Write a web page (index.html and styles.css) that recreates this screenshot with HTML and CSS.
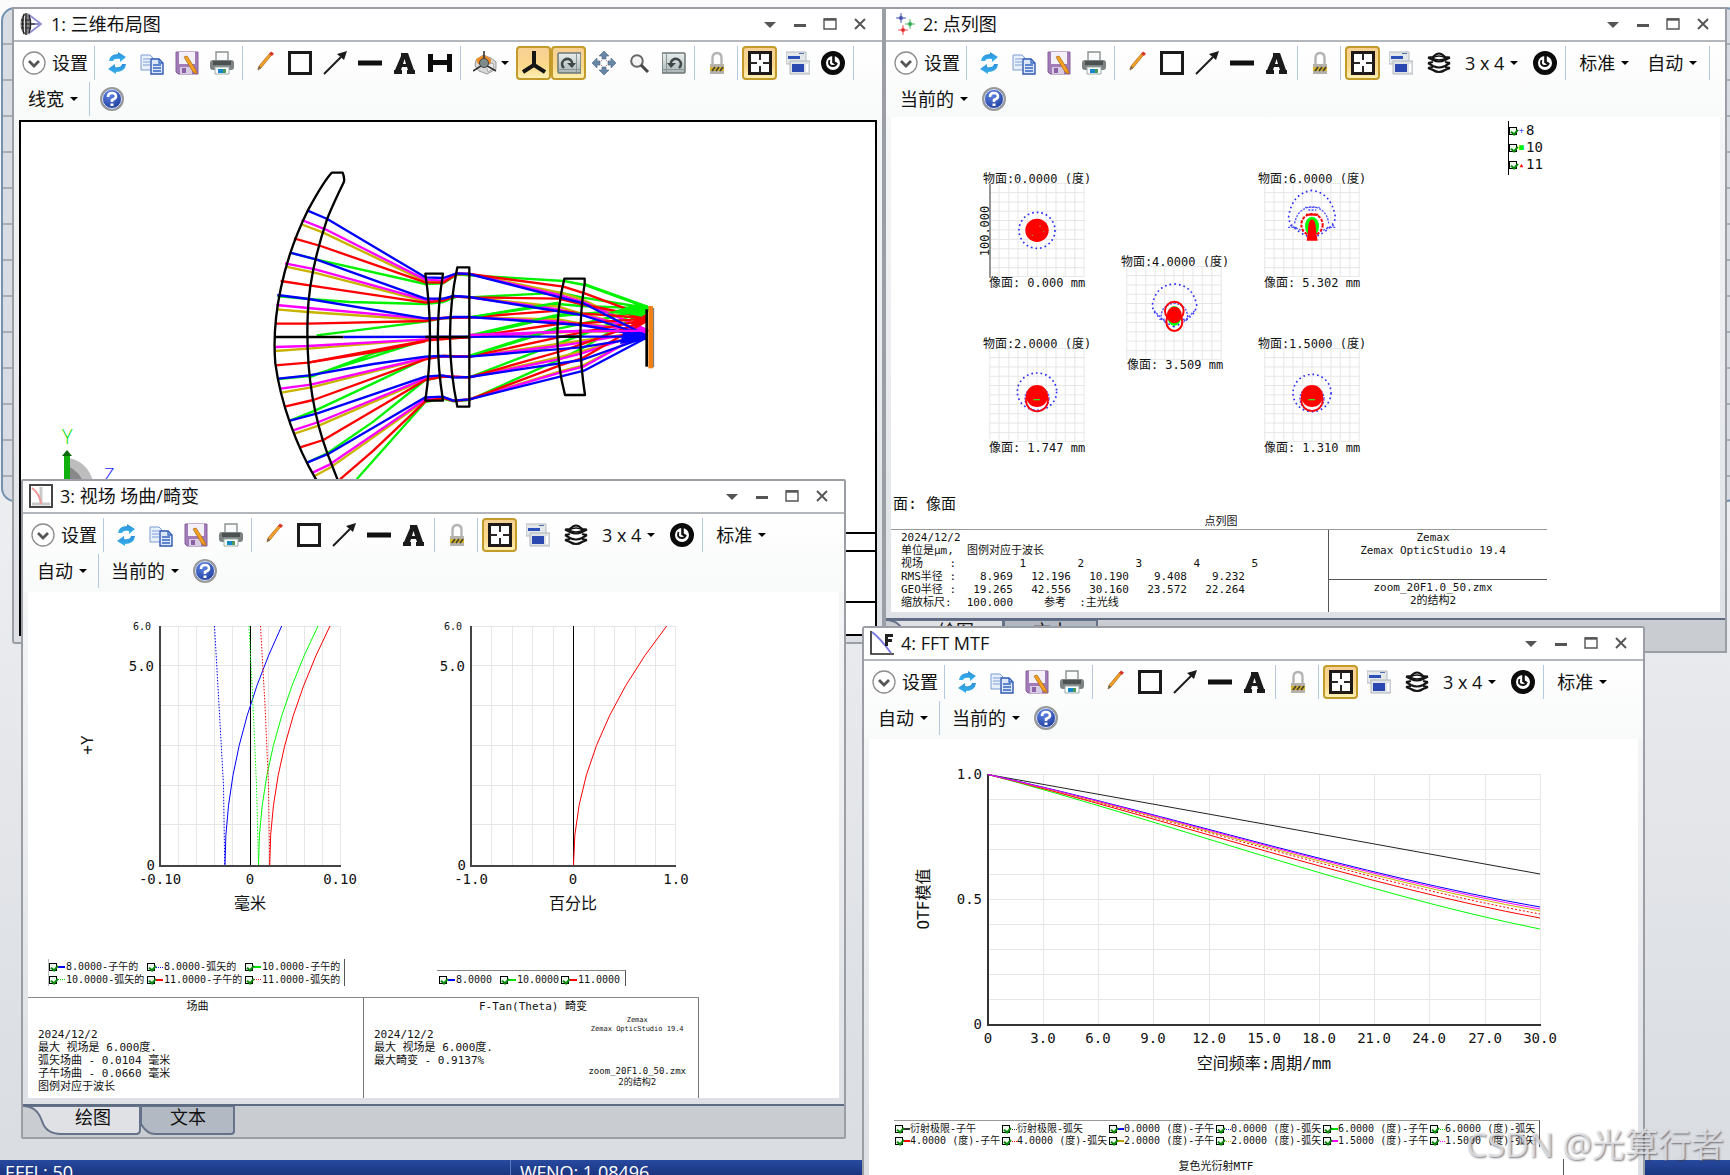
FILE: index.html
```html
<!DOCTYPE html>
<html lang="zh-CN">
<head>
<meta charset="utf-8">
<title>Zemax OpticStudio</title>
<link rel="stylesheet" href="styles.css">
</head>
<body>
<svg class="sprite" aria-hidden="true">
  <defs>
    <linearGradient id="metal" x1="0" y1="0" x2="0" y2="1"><stop offset="0" stop-color="#e9eeee"/><stop offset="1" stop-color="#a9b5b5"/></linearGradient>
    <linearGradient id="sky" x1="0" y1="0" x2="0" y2="1"><stop offset="0" stop-color="#2f8fd8"/><stop offset="1" stop-color="#35b4ee"/></linearGradient>
    <radialGradient id="globe" cx=".4" cy=".3" r=".8"><stop offset="0" stop-color="#5f86e6"/><stop offset="1" stop-color="#15308f"/></radialGradient>
  </defs>
  <symbol id="i-chevron" viewBox="0 0 24 24"><circle cx="12" cy="12" r="11" fill="#fff" stroke="#8d8d8d" stroke-width="1.3"/><path d="M7 10l5 5 5-5" fill="none" stroke="#555" stroke-width="2.8"/></symbol>
  <symbol id="i-refresh" viewBox="0 0 24 24"><path d="M4 10q1-7 9-7V1l8 5-6 5V8q-6-1-7 2z" fill="url(#sky)"/><path d="M21 13q-1 8-10 8v2l-8-5 7-5v3q6 1 7-3z" fill="url(#sky)"/></symbol>
  <symbol id="i-copy" viewBox="0 0 24 24"><path d="M1 4h9l3 3v12H1z" fill="#e8f0fb" stroke="#7d9cd0"/><path d="M3 8h7M3 11h7M3 14h7" stroke="#7fa0d8"/><path d="M11 8h8l4 4v11H11z" fill="#dce8fa" stroke="#2f58b0" stroke-width="1.4"/><path d="M19 8v4h4M13 14h8M13 17h8M13 20h8" stroke="#3566c0" stroke-width="1.3" fill="none"/></symbol>
  <symbol id="i-save" viewBox="0 0 24 24"><path d="M1 1h22v22H3l-2-2z" fill="#a27bb8" stroke="#86629c"/><path d="M4 1h16v12H4z" fill="#f3f1f7"/><path d="M5 16h12v7H5z" fill="#d8cce3"/><path d="M7 17h4v5H7z" fill="#8b62a5"/><path d="M9 6l3-1 9 14 1 4-4-2z" fill="#f5a020" stroke="#a86612" stroke-width=".7"/><path d="M19 20l2-1 1 4z" fill="#d82"/></symbol>
  <symbol id="i-print" viewBox="0 0 24 24"><path d="M6 1h12v10H6z" fill="#fafafa" stroke="#8b9191" stroke-width="1.4"/><rect x="0" y="9" width="24" height="10" rx="3" fill="#7d8282"/><path d="M3 10h18v4H3z" fill="#4c5151"/><path d="M5 16h14v7H5z" fill="#fff" stroke="#9aa" /><path d="M8 18h5v4H8z" fill="#1586c8"/><path d="M13 18h3v4h-3z" fill="#4b9a5a"/></symbol>
  <symbol id="i-pencil" viewBox="0 0 24 24"><path d="M5 19l1-4L17 2l2 1.500L8 17z" fill="#f6a12a" stroke="#b06c18" stroke-width=".8"/><path d="M16 3l2-2.500 3 2L19 5z" fill="#d8362a"/><path d="M5 19l1-4 2 2z" fill="#666"/></symbol>
  <symbol id="i-rect" viewBox="0 0 24 24"><path d="M1.500 1.500h21v21h-21z" fill="#fff" stroke="#1b1b1b" stroke-width="3"/></symbol>
  <symbol id="i-arrow" viewBox="0 0 24 24"><path d="M1 23L18 6" stroke="#1b1b1b" stroke-width="2"/><path d="M24 0l-3 9-7-6z" fill="#1b1b1b"/></symbol>
  <symbol id="i-line" viewBox="0 0 24 24"><path d="M0 12h24" stroke="#111" stroke-width="5"/></symbol>
  <symbol id="i-a" viewBox="0 0 24 24"><path fill-rule="evenodd" d="M8 2h7l6 17h1v4h-8v-4h1l-1-3H9l-1 3h1v4H1v-4h1L8 5zM11.500 8L10 13h3z" fill="#1b1b1b"/></symbol>
  <symbol id="i-h" viewBox="0 0 24 24"><path d="M0 3h5v6h14V3h5v18h-5v-7H5v7H0z" fill="#0c0c0c"/></symbol>
  <symbol id="i-cube" viewBox="0 0 24 24"><path d="M3 9l7-5 8 3 5 4v7l-9 5-8-3-4-5z" fill="#d9d9d9" stroke="#999"/><path d="M3 8l8-4 7 4v6l-4 2-9-3z" fill="#f08c22"/><path d="M13 14l7-2 1 5-6 4z" fill="#eee" stroke="#aaa"/><path d="M11 0v13M0 20l11-7 12 7" stroke="#333" stroke-width="1.600" fill="none"/><circle cx="11" cy="12" r="4.500" fill="#7f8b8b" stroke="#444"/></symbol>
  <symbol id="i-axes" viewBox="0 0 24 24"><path d="M12 0v14L1 21M12 14l11 7" stroke="#151515" stroke-width="4" fill="none"/></symbol>
  <symbol id="i-rot" viewBox="0 0 24 24"><rect x="1" y="2" width="23" height="20" rx="1" fill="url(#metal)" stroke="#6c7777" stroke-width="1.500"/><path d="M19.500 3v18M1 18.500h22" stroke="#8a9696"/><path d="M7 17q-4-4 0-8 5-3 8 2v3" fill="none" stroke="#3f4848" stroke-width="2.400"/><path d="M10 12h9l-4 5z" fill="#3f4848"/></symbol>
  <symbol id="i-unrot" viewBox="0 0 24 24"><rect x="0" y="2" width="23" height="20" rx="1" fill="url(#metal)" stroke="#6c7777" stroke-width="1.500"/><path d="M4.500 3v18M1 18.500h22" stroke="#8a9696"/><path d="M17 17q4-4 0-8-5-3-8 2v3" fill="none" stroke="#3f4848" stroke-width="2.400"/><path d="M5 12h9l-5 5z" fill="#3f4848"/></symbol>
  <symbol id="i-pan" viewBox="0 0 24 24"><g fill="#6787a6" stroke="#49617e" stroke-width=".6"><path d="M12 0l5 5h-3v3h-4V5H7zM12 24l-5-5h3v-3h4v3h3zM0 12l5-5v3h3v4H5v3zM24 12l-5 5v-3h-3v-4h3V7z"/></g><path d="M9 9h1v1H9zM14 9h1v1h-1zM9 14h1v1H9zM14 14h1v1h-1z" fill="#c66"/></symbol>
  <symbol id="i-zoom" viewBox="0 0 24 24"><circle cx="10" cy="10" r="5.800" fill="#f4f4f4" stroke="#666" stroke-width="2"/><path d="M14 14l7 7" stroke="#444" stroke-width="3"/></symbol>
  <symbol id="i-lock" viewBox="0 0 24 24"><path d="M7.500 14V7q0-5 4.500-5t4.500 5v7" fill="none" stroke="#b4b4b4" stroke-width="2.400"/><path d="M5 13h14v10H5z" fill="#b4b2aa"/><path d="M5 16h14v4H5z" fill="#d9b52c"/><path d="M7 20l3-4M11 20l3-4M15 20l3-4" stroke="#4a4430" stroke-width="1.800"/></symbol>
  <symbol id="i-frame" viewBox="0 0 24 24"><path d="M1.500 1.500h21v21h-21z" fill="#fff" stroke="#1f1a17" stroke-width="3"/><path d="M12 2v7M12 15v7M2 12h7M15 12h7" stroke="#2b2623" stroke-width="2"/></symbol>
  <symbol id="i-windows" viewBox="0 0 24 24"><path d="M0 1h20v12H0z" fill="#e4e7ea" stroke="#b4babf"/><path d="M2 5h12v3H2z" fill="#2c50b8"/><path d="M13 2h5v1h-5z" fill="#5070b0"/><path d="M4 10h20v13H4z" fill="#dfe3e6" stroke="#b0b6bb"/><path d="M6 13h12v8H6z" fill="#2b48b0"/><path d="M20 13h2v8h-2z" fill="#fff"/></symbol>
  <symbol id="i-layers" viewBox="0 0 24 24"><path d="M1 6.500L6 6q3-3.500 6-3.500T18 6l5 .5M1 6.500L6 9q6 3 12 0l5-2.500M1 12l5-1M18 11l5 1M1 12l5 3q6 3 12 0l5-3M1 17l5-1M18 16l5 1M1 17l5 2q6 4 12 0l5-2" fill="none" stroke="#141414" stroke-width="2.200"/><path d="M5 7q7-4 14 0-7 4-14 0" fill="#fff" stroke="#141414" stroke-width="1.500"/></symbol>
  <symbol id="i-target" viewBox="0 0 24 24"><circle cx="12" cy="12" r="9.500" fill="#fff" stroke="#0b0b0b" stroke-width="5"/><path d="M12.500 5v6l3 2" stroke="#111" stroke-width="2.600" fill="none"/><path d="M8.500 9q-2 6 3.500 6 3 0 4-3" fill="none" stroke="#111" stroke-width="1.800"/></symbol>
  <symbol id="i-help" viewBox="0 0 24 24"><circle cx="12" cy="12" r="11" fill="url(#globe)" stroke="#9a9a9a" stroke-width="2"/><circle cx="12" cy="12" r="9.500" fill="none" stroke="#dfe4ee" stroke-width="1"/><path d="M8 10q0-4 4-4t4 3.500q0 2-4 3.500v2" fill="none" stroke="#fff" stroke-width="2.600"/><path d="M10.500 16.500h3v2.500h-3z" fill="#fff"/></symbol>
  <symbol id="i-down" viewBox="0 0 8 8"><path d="M0 2h8L4 6z"/></symbol>
  <symbol id="w-menu" viewBox="0 0 14 14"><path d="M1 5h12l-6 6z" fill="#555"/></symbol>
  <symbol id="w-min" viewBox="0 0 14 14"><path d="M1 8.500h12" stroke="#555" stroke-width="3"/></symbol>
  <symbol id="w-max" viewBox="0 0 14 14"><path d="M1 2h12v10H1z" fill="none" stroke="#555" stroke-width="1.400"/><path d="M1 2.500h12" stroke="#555" stroke-width="2.400"/></symbol>
  <symbol id="w-close" viewBox="0 0 14 14"><path d="M2 2l10 10M12 2L2 12" stroke="#555" stroke-width="1.900"/></symbol>
  <symbol id="s-grid" viewBox="0 0 286 283"><path d="M1 1h284v281H1zM29 0v283M58 0v283M86 0v283M115 0v283M143 0v283M171 0v283M200 0v283M228 0v283M257 0v283M0 29h286M0 57h286M0 85h286M0 113h286M0 141h286M0 170h286M0 198h286M0 226h286M0 255h286" fill="none" stroke="#e6e6e6" stroke-width="3"/></symbol>
</svg>

<div class="app">
  <main class="desktop">
    <div class="editor"></div>

    <section class="window w-layout">
      <header class="titlebar">
        <svg class="icon" viewBox="0 0 24 24"><path d="M8 2l13 10L8 22M8 12h13" fill="none" stroke="#8d8fd0" stroke-width="1.800"/><ellipse cx="6" cy="12" rx="5.500" ry="11" fill="#8a8a8a"/><path d="M6 1v22M4 2q-3 10 0 20M9 3q3 9 0 18M1 8h10M1 12h14M1 16h10" stroke="#222" stroke-width="1.200" fill="none"/><path d="M4.500 4v16" stroke="#ddd"/></svg>
        <h2>1: 三维布局图</h2>
        <div class="winbtns"><button aria-label="菜单"><svg><use href="#w-menu"/></svg></button><button aria-label="最小化"><svg><use href="#w-min"/></svg></button><button aria-label="最大化"><svg><use href="#w-max"/></svg></button><button aria-label="关闭"><svg><use href="#w-close"/></svg></button></div>
      </header>
      <div class="toolbar">
        <div class="row">
          <button class="settings"><svg class="icon"><use href="#i-chevron"/></svg>设置</button><i class="sep"></i>
          <button class="tool" aria-label="刷新"><svg class="icon"><use href="#i-refresh"/></svg></button><button class="tool" aria-label="复制"><svg class="icon"><use href="#i-copy"/></svg></button><button class="tool" aria-label="保存"><svg class="icon"><use href="#i-save"/></svg></button><button class="tool" aria-label="打印"><svg class="icon"><use href="#i-print"/></svg></button><i class="sep"></i>
          <button class="tool" aria-label="铅笔"><svg class="icon"><use href="#i-pencil"/></svg></button><button class="tool" aria-label="矩形"><svg class="icon"><use href="#i-rect"/></svg></button><button class="tool" aria-label="箭头"><svg class="icon"><use href="#i-arrow"/></svg></button><button class="tool" aria-label="直线"><svg class="icon"><use href="#i-line"/></svg></button><button class="tool" aria-label="文字"><svg class="icon"><use href="#i-a"/></svg></button><button class="tool" aria-label="标尺"><svg class="icon"><use href="#i-h"/></svg></button><i class="sep"></i>
          <button class="tool view" aria-label="视图"><svg class="icon"><use href="#i-cube"/></svg><svg class="caret"><use href="#i-down"/></svg></button><button class="tool on" aria-label="坐标轴"><svg class="icon"><use href="#i-axes"/></svg></button><button class="tool on" aria-label="旋转"><svg class="icon"><use href="#i-rot"/></svg></button><button class="tool" aria-label="平移"><svg class="icon"><use href="#i-pan"/></svg></button><button class="tool" aria-label="缩放"><svg class="icon"><use href="#i-zoom"/></svg></button><button class="tool" aria-label="复位"><svg class="icon"><use href="#i-unrot"/></svg></button><i class="sep"></i>
          <button class="tool" aria-label="锁定"><svg class="icon"><use href="#i-lock"/></svg></button><i class="sep"></i>
          <button class="tool on" aria-label="适应窗口"><svg class="icon"><use href="#i-frame"/></svg></button><button class="tool wide" aria-label="克隆窗口"><svg class="icon"><use href="#i-windows"/></svg></button><button class="tool" aria-label="重置"><svg class="icon"><use href="#i-target"/></svg></button><i class="sep"></i>
        </div>
        <div class="row">
          <button class="drop">线宽<svg class="caret"><use href="#i-down"/></svg></button><i class="sep"></i>
          <button class="tool" aria-label="帮助"><svg class="icon"><use href="#i-help"/></svg></button>
        </div>
      </div>
      <div class="canvas boxed">
        <svg class="plot" viewBox="21 122 854 512" preserveAspectRatio="xMinYMin meet">
          <g transform="translate(240 150) scale(.33333)" fill="none" stroke-width="7" stroke-linejoin="round">
            <path stroke="#00f200" d="M150 308L228 328 556 402 610 400 650 374 688 376 972 393 1034 405 1222 473M112 438L206 447 330 456 556 462 610 456 650 440 688 442 960 428 1025 442 1222 474M230 556L556 515 610 505 688 502 955 462 1022 468 1222 475M115 687L208 678 400 620 556 570 688 561 955 498 1022 492 1222 476M208 682L400 610 556 572M150 812L225 782 400 700 556 626 610 618 688 620 955 536 1022 522 1222 477M203 937L262 910 400 815 556 690 610 680 688 682 955 580 1022 556 1222 478M350 988L556 756 608 746 640 754 688 750 955 630 1025 596 1222 479"/>
            <path stroke="#c8b400" d="M182 222L250 248 556 394 610 396 650 372 688 372 970 430 1034 452 1222 542M137 350L223 368 556 454 610 450 640 438 688 442 955 470 1022 490 1222 542M109 478L204 486 556 510 610 504 688 502 955 508 1022 520 1222 543M106 603L204 596 556 568 688 561 955 548 1022 545 1222 544M124 728L214 712 556 625 610 618 688 620 955 582 1022 572 1222 545M160 852L238 826 556 688 610 678 688 682 955 622 1025 604 1222 546M224 978L275 950 556 752 608 742 640 752 688 748 960 664 1030 646 1222 546"/>
            <path stroke="#f0f" d="M185 210L256 238 556 389 610 392 650 370 688 372 970 438 1034 458 1222 540M135 340L226 358 556 450 610 448 640 438 688 442 955 478 1022 494 1222 541M109 465L204 474 556 506 610 504 688 502 955 514 1022 524 1222 541M106 591L204 588 556 568 688 561 955 546 1022 542 1222 542M122 716L212 704 556 624 610 618 688 620 955 588 1022 578 1222 543M157 842L236 816 556 686 610 678 688 682 955 628 1025 610 1222 544M218 968L270 943 556 748 608 741 640 752 688 748 960 668 1030 650 1222 544"/>
            <path stroke="red" d="M162 265L242 288 556 397 610 398 650 372 688 372 970 410 1034 430 1222 500M122 393L213 407 556 458 610 452 640 440 688 442 955 446 1022 462 1222 502M106 521H204L556 513 610 504 688 502 955 482 1022 490 1222 504M106 646L204 638 556 572 688 561 955 522 1022 520 1222 506M134 770L220 750 556 628 610 618 688 620 955 562 1022 548 1222 508M178 893L250 870 556 690 610 680 688 682 955 606 1022 584 1222 510M300 988L400 902 556 754 608 744 640 753 688 749 960 646 1028 624 1222 512"/>
            <path stroke="red" d="M204 638L400 606 556 574"/><path stroke="#00f200" d="M690 556L955 494 1022 490M690 617L955 532M690 502L955 458M1034 402L1222 470"/>
            <path stroke="#00f" d="M203 182L262 207 556 382 610 384 650 370 688 372 1030 460 1222 558M150 308L228 328 556 446 610 446 640 438 688 441 1025 495 1222 558M112 435L206 447 556 505 600 505 640 501 688 501 1022 525 1222 558M310 561L1222 559M115 686L208 676 400 642 556 620 600 618 640 620 688 620 1022 592 1222 560M150 812L232 790 556 680 605 676 640 683 688 681 1025 630 1222 560M203 937L268 910 556 742 608 740 640 752 688 748 1032 662 1222 562"/>
            <path fill="#00f200" d="M1222 466L1190 462 1100 490 1160 492 1205 500 1235 478z"/><path fill="red" d="M1222 500L1170 518 1185 530 1222 512z"/><path fill="#00f" d="M1222 554L1150 546 1140 582 1222 568z"/>
            <path stroke="#f0f" d="M690 555L955 545 1235 542"/>
            <path stroke="#000" stroke-width="7" d="M102 561H310M556 561H690M955 560H1025"/>
            <g stroke="#000" stroke-width="7"><path d="M420 1200Q330 1110 228 988C170 890 122 760 106 640 94 500 130 330 203 182 226 140 248 98 275 68H308Q314 82 312 95C285 150 268 190 262 205 230 300 205 410 203 500 198 640 214 780 262 910L340 1110"/><path d="M556 371H609Q578 560 609 752H556Q584 560 556 371z"/><path d="M652 352H688V770H652Q608 560 652 352z"/><path d="M973 386H1034V400Q1008 560 1035 735H975Q930 560 973 386z"/><path stroke-width="8" d="M1220 478V650"/></g>
            <path d="M1232 468V655" stroke="#ef7f16" stroke-width="14"/><path d="M1241 474V652" stroke="#666" stroke-width="3"/>
          </g>
          <path d="M68 484V458Q88 461 94 484z" fill="#bdbdbd"/><path d="M68 484V466Q80 472 84 484z" fill="#888"/>
          <path d="M67 484V456" stroke="#11b011" stroke-width="6"/><path d="M62 456l5-6 5 6z" fill="#066b06"/>
          <text x="62" y="444" class="axis-y">Y</text><text x="104" y="481" class="axis-z">Z</text>
          <path d="M21 533H875M21 551H875M600 602H875" stroke="#000" stroke-width="2"/>
        </svg>
      </div>
    </section>

    <section class="window w-spot">
      <header class="titlebar">
        <svg class="icon" viewBox="0 0 24 24"><path d="M9 1q0 5 5 5-5 0-5 5 0-5-5-5 5 0 5-5z" fill="#4450a8" stroke="#8f98d8"/><path d="M18 7q0 5 5 5-5 0-5 5 0-5-5-5 5 0 5-5z" fill="#2bab4b" stroke="#8fd8a2"/><path d="M11 13q0 5 5 5-5 0-5 5 0-5-5-5 5 0 5-5z" fill="#e62a2a" stroke="#f59a9a"/></svg>
        <h2>2: 点列图</h2>
        <div class="winbtns"><button aria-label="菜单"><svg><use href="#w-menu"/></svg></button><button aria-label="最小化"><svg><use href="#w-min"/></svg></button><button aria-label="最大化"><svg><use href="#w-max"/></svg></button><button aria-label="关闭"><svg><use href="#w-close"/></svg></button></div>
      </header>
      <div class="toolbar tight">
        <div class="row">
          <button class="settings"><svg class="icon"><use href="#i-chevron"/></svg>设置</button><i class="sep"></i>
          <button class="tool" aria-label="刷新"><svg class="icon"><use href="#i-refresh"/></svg></button><button class="tool" aria-label="复制"><svg class="icon"><use href="#i-copy"/></svg></button><button class="tool" aria-label="保存"><svg class="icon"><use href="#i-save"/></svg></button><button class="tool" aria-label="打印"><svg class="icon"><use href="#i-print"/></svg></button><i class="sep"></i>
          <button class="tool" aria-label="铅笔"><svg class="icon"><use href="#i-pencil"/></svg></button><button class="tool" aria-label="矩形"><svg class="icon"><use href="#i-rect"/></svg></button><button class="tool" aria-label="箭头"><svg class="icon"><use href="#i-arrow"/></svg></button><button class="tool" aria-label="直线"><svg class="icon"><use href="#i-line"/></svg></button><button class="tool" aria-label="文字"><svg class="icon"><use href="#i-a"/></svg></button><i class="sep"></i>
          <button class="tool" aria-label="锁定"><svg class="icon"><use href="#i-lock"/></svg></button><i class="sep"></i>
          <button class="tool on" aria-label="适应窗口"><svg class="icon"><use href="#i-frame"/></svg></button><button class="tool wide" aria-label="克隆窗口"><svg class="icon"><use href="#i-windows"/></svg></button><button class="tool wide" aria-label="图层"><svg class="icon"><use href="#i-layers"/></svg></button><button class="drop">3 x 4<svg class="caret"><use href="#i-down"/></svg></button><button class="tool" aria-label="重置"><svg class="icon"><use href="#i-target"/></svg></button><i class="sep"></i>
          <button class="drop">标准<svg class="caret"><use href="#i-down"/></svg></button><button class="drop">自动<svg class="caret"><use href="#i-down"/></svg></button><i class="sep"></i>
        </div>
        <div class="row">
          <button class="drop">当前的<svg class="caret"><use href="#i-down"/></svg></button><button class="tool" aria-label="帮助"><svg class="icon"><use href="#i-help"/></svg></button>
        </div>
      </div>
      <div class="canvas">
        <svg class="plot" viewBox="891 117 829 376" preserveAspectRatio="xMinYMin meet">
          <use href="#s-grid" x="989" y="183" width="96" height="94"/><use href="#s-grid" x="1264" y="183" width="96" height="94"/><use href="#s-grid" x="1126" y="266" width="96" height="94"/><use href="#s-grid" x="989" y="348" width="96" height="94"/><use href="#s-grid" x="1264" y="348" width="96" height="94"/>
          <path d="M990 184V278" stroke="#777" stroke-width="1.500"/>
          <g transform="translate(960 160) scale(.33333)" fill="none">
            <g stroke="#2a2aff" stroke-width="5" stroke-dasharray="5 9">
              <circle cx="231" cy="211" r="54"/>
              <path d="M1056 235Q985 205 986 170 996 100 1056 91 1114 100 1126 170 1125 205 1056 235"/>
              <path d="M643 500Q578 470 577 435 588 375 643 372 698 375 710 435 708 470 643 500"/>
              <ellipse cx="231" cy="695" rx="59" ry="56"/>
              <ellipse cx="1056" cy="699" rx="57" ry="56"/>
            </g>
            <g stroke="#5050ff" stroke-width="4" stroke-dasharray="6 4">
              <path d="M990 196l40 18M1122 196l-40 18M1004 190q8-45 52-50 44 5 50 50M1035 142h44M1045 150h24M984 202h28M1100 202h26"/>
              <path d="M604 480q-5-45 39-50 44 5 39 50M582 452l42 42M704 452l-42 42M598 478h20M668 478h20"/>
              <circle cx="231" cy="716" r="36"/><circle cx="1056" cy="716" r="36"/>
            </g>
            <circle cx="231" cy="211" r="35" fill="red"/><path d="M215 226h4M238 198h4M250 215h3" stroke="#8b4" stroke-width="3"/>
            <ellipse cx="1056" cy="199" rx="21" ry="29" fill="#0f0"/><circle cx="1056" cy="194" r="32" stroke="red" stroke-width="6" stroke-dasharray="9 4"/><path d="M1038 164h37" stroke="red" stroke-width="6"/><path d="M1056 178Q1068 180 1068 212L1073 242H1040L1044 212Q1044 180 1056 178z" fill="red"/>
            <ellipse cx="643" cy="468" rx="21" ry="30" fill="#0f0"/><ellipse cx="643" cy="465" rx="22" ry="25" fill="red"/><circle cx="643" cy="453" r="28" stroke="red" stroke-width="6"/><ellipse cx="643" cy="485" rx="24" ry="28" stroke="red" stroke-width="6"/>
            <circle cx="231" cy="708" r="33" fill="red"/><circle cx="231" cy="721" r="33" stroke="red" stroke-width="5"/><path d="M220 719h20" stroke="#4d1" stroke-width="4"/>
            <circle cx="1056" cy="708" r="33" fill="red"/><circle cx="1056" cy="721" r="32" stroke="red" stroke-width="5"/><path d="M1045 719h20" stroke="#4d1" stroke-width="4"/>
          </g>
          <g class="t12">
            <text x="1037" y="183">物面:0.0000 (度)</text><text x="1037" y="287">像面: 0.000 mm</text>
            <text x="1312" y="183">物面:6.0000 (度)</text><text x="1312" y="287">像面: 5.302 mm</text>
            <text x="1175" y="266">物面:4.0000 (度)</text><text x="1175" y="369">像面: 3.509 mm</text>
            <text x="1037" y="348">物面:2.0000 (度)</text><text x="1037" y="452">像面: 1.747 mm</text>
            <text x="1312" y="348">物面:1.5000 (度)</text><text x="1312" y="452">像面: 1.310 mm</text>
            <text transform="translate(989 231) rotate(-90)">100.000</text>
          </g>
        </svg>
        <div class="wave-legend">
          <label><input type="checkbox" checked><b class="pt plus">+</b>8</label>
          <label><input type="checkbox" checked><b class="pt square">■</b>10</label>
          <label><input type="checkbox" checked><b class="pt tri">▲</b>11</label>
        </div>
        <p class="surface">面: 像面</p>
        <p class="plot-name">点列图</p>
        <div class="spot-footer">
          <div class="spot-data">
            <p>2024/12/2</p>
            <p>单位是μm,  图例对应于波长</p>
            <table>
              <tr class="head"><th>视场    :</th><td>1</td><td>2</td><td>3</td><td>4</td><td>5</td></tr>
              <tr><th>RMS半径 :</th><td>8.969</td><td>12.196</td><td>10.190</td><td>9.408</td><td>9.232</td></tr>
              <tr><th>GEO半径 :</th><td>19.265</td><td>42.556</td><td>30.160</td><td>23.572</td><td>22.264</td></tr>
              <tr><th>缩放标尺:</th><td>100.000</td><td colspan="4" class="ref">参考  :主光线</td></tr>
            </table>
          </div>
          <div class="spot-id"><p>Zemax<br>Zemax OpticStudio 19.4</p><p>zoom_20F1.0_50.zmx<br>2的结构2</p></div>
        </div>
      </div>
      <nav class="tabs"><button class="tab active"><svg viewBox="0 0 118 30" preserveAspectRatio="none"><path d="M0 0Q14 0 19 15 23 28 38 28H113Q117 28 117 24V0z"/></svg><span>绘图</span></button><button class="tab"><svg viewBox="0 0 94 30" preserveAspectRatio="none"><path d="M0 0V18Q6 28 14 28H90Q93 28 93 25V0z"/></svg><span>文本</span></button></nav>
    </section>

    <section class="window w-field">
      <header class="titlebar">
        <svg class="icon" viewBox="0 0 24 24"><path d="M1 1h22v22H1z" fill="#fff" stroke="#444" stroke-width="2"/><path d="M12 3v17M3 20h18" stroke="#c9c9c9" stroke-width="3"/><path d="M3 4q8 6 9 16" fill="none" stroke="#f09a9a" stroke-width="2"/></svg>
        <h2>3: 视场 场曲/畸变</h2>
        <div class="winbtns"><button aria-label="菜单"><svg><use href="#w-menu"/></svg></button><button aria-label="最小化"><svg><use href="#w-min"/></svg></button><button aria-label="最大化"><svg><use href="#w-max"/></svg></button><button aria-label="关闭"><svg><use href="#w-close"/></svg></button></div>
      </header>
      <div class="toolbar">
        <div class="row">
          <button class="settings"><svg class="icon"><use href="#i-chevron"/></svg>设置</button><i class="sep"></i>
          <button class="tool" aria-label="刷新"><svg class="icon"><use href="#i-refresh"/></svg></button><button class="tool" aria-label="复制"><svg class="icon"><use href="#i-copy"/></svg></button><button class="tool" aria-label="保存"><svg class="icon"><use href="#i-save"/></svg></button><button class="tool" aria-label="打印"><svg class="icon"><use href="#i-print"/></svg></button><i class="sep"></i>
          <button class="tool" aria-label="铅笔"><svg class="icon"><use href="#i-pencil"/></svg></button><button class="tool" aria-label="矩形"><svg class="icon"><use href="#i-rect"/></svg></button><button class="tool" aria-label="箭头"><svg class="icon"><use href="#i-arrow"/></svg></button><button class="tool" aria-label="直线"><svg class="icon"><use href="#i-line"/></svg></button><button class="tool" aria-label="文字"><svg class="icon"><use href="#i-a"/></svg></button><i class="sep"></i>
          <button class="tool" aria-label="锁定"><svg class="icon"><use href="#i-lock"/></svg></button><i class="sep"></i>
          <button class="tool on" aria-label="适应窗口"><svg class="icon"><use href="#i-frame"/></svg></button><button class="tool wide" aria-label="克隆窗口"><svg class="icon"><use href="#i-windows"/></svg></button><button class="tool wide" aria-label="图层"><svg class="icon"><use href="#i-layers"/></svg></button><button class="drop">3 x 4<svg class="caret"><use href="#i-down"/></svg></button><button class="tool" aria-label="重置"><svg class="icon"><use href="#i-target"/></svg></button><i class="sep"></i>
          <button class="drop">标准<svg class="caret"><use href="#i-down"/></svg></button>
        </div>
        <div class="row">
          <button class="drop">自动<svg class="caret"><use href="#i-down"/></svg></button><i class="sep"></i><button class="drop">当前的<svg class="caret"><use href="#i-down"/></svg></button><button class="tool" aria-label="帮助"><svg class="icon"><use href="#i-help"/></svg></button>
        </div>
      </div>
      <div class="canvas">
        <svg class="plot" viewBox="28 592 811 367" preserveAspectRatio="xMinYMin meet">
          <g fill="none">
            <path stroke="#e6e6e6" d="M178.500 626V865M196.500 626V865M214.500 626V865M232.500 626V865M268.500 626V865M286.500 626V865M304.500 626V865M322.500 626V865M340.500 626V865M160 626.500H341M160 665.500H341M160 705.500H341M160 745.500H341M160 785.500H341M160 824.500H341"/>
            <path stroke="#e6e6e6" d="M491.500 626V865M512.500 626V865M532.500 626V865M553.500 626V865M594.500 626V865M614.500 626V865M635.500 626V865M655.500 626V865M675.500 626V865M471 626.500H676M471 665.500H676M471 705.500H676M471 745.500H676M471 785.500H676M471 824.500H676"/>
            <path stroke="#444" stroke-width="2" d="M160 626V866H341M471 626V866H676"/>
            <path stroke="#000" d="M250.500 626V865M573.500 626V865"/>
            <path stroke="#00f" d="M281.700 626Q225 745.500 225 865"/><path stroke="#0f0" d="M318 626Q258.500 745.500 258.500 865"/><path stroke="red" d="M330 626Q269.700 745.500 269.700 865"/>
            <path stroke="red" d="M666.700 626Q573 745 573.500 865"/>
            <g stroke-dasharray="1.500 1.500"><path stroke="#00f" d="M214.500 626L219 705 223.500 785 224.700 865"/><path stroke="#0f0" d="M249 626L253 705 256.500 785 258.500 865"/><path stroke="red" d="M260.500 626L265 705 268.500 785 269.700 865"/></g>
          </g>
          <g class="t14 end"><text x="154" y="671">5.0</text><text x="155" y="870">0</text><text x="465" y="671">5.0</text><text x="466" y="870">0</text></g>
          <g class="t10 end"><text x="151" y="630">6.0</text><text x="462" y="630">6.0</text></g>
          <g class="t14"><text x="160" y="884">-0.10</text><text x="250" y="884">0</text><text x="340" y="884">0.10</text><text x="471" y="884">-1.0</text><text x="573" y="884">0</text><text x="676" y="884">1.0</text></g>
          <g class="t16"><text x="250" y="909">毫米</text><text x="573" y="909">百分比</text><text transform="translate(93 745) rotate(-90)">+Y</text></g>
        </svg>
        <div class="field-legends">
          <div class="legend legend-curv">
            <label><input type="checkbox" checked><i class="blue"></i>8.0000-子午的</label><label><input type="checkbox" checked><i class="blue dot"></i>8.0000-弧矢的</label><label><input type="checkbox" checked><i class="green"></i>10.0000-子午的</label>
            <label><input type="checkbox" checked><i class="green dot"></i>10.0000-弧矢的</label><label><input type="checkbox" checked><i class="red"></i>11.0000-子午的</label><label><input type="checkbox" checked><i class="red dot"></i>11.0000-弧矢的</label>
          </div>
          <div class="legend legend-dist">
            <label><input type="checkbox" checked><i class="blue"></i>8.0000</label><label><input type="checkbox" checked><i class="green"></i>10.0000</label><label><input type="checkbox" checked><i class="red"></i>11.0000</label>
          </div>
        </div>
        <div class="field-footer">
          <div><p class="center">场曲</p><p class="notes">2024/12/2
最大 视场是 6.000度.
弧矢场曲 - 0.0104 毫米
子午场曲 - 0.0660 毫米
图例对应于波长</p></div>
          <div><p class="center">F-Tan(Theta) 畸变</p><div class="cols"><p class="notes">2024/12/2
最大 视场是 6.000度.
最大畸变 - 0.9137%</p><div class="ids"><p class="tiny">Zemax<br>Zemax OpticStudio 19.4</p><p class="small">zoom_20F1.0_50.zmx<br>2的结构2</p></div></div></div>
        </div>
      </div>
      <nav class="tabs"><button class="tab active"><svg viewBox="0 0 118 30" preserveAspectRatio="none"><path d="M0 0Q14 0 19 15 23 28 38 28H113Q117 28 117 24V0z"/></svg><span>绘图</span></button><button class="tab"><svg viewBox="0 0 94 30" preserveAspectRatio="none"><path d="M0 0V18Q6 28 14 28H90Q93 28 93 25V0z"/></svg><span>文本</span></button></nav>
    </section>

    <section class="window w-mtf">
      <header class="titlebar">
        <svg class="icon" viewBox="0 0 24 24"><path d="M1 0v23h23" fill="none" stroke="#222" stroke-width="1.600"/><path d="M2 1q8 6 19 21" fill="none" stroke="#7a7ae0" stroke-width="2"/><path d="M15 3h8v3h-5v2h4v3h-4v4h-3z" fill="#222"/></svg>
        <h2>4: FFT MTF</h2>
        <div class="winbtns"><button aria-label="菜单"><svg><use href="#w-menu"/></svg></button><button aria-label="最小化"><svg><use href="#w-min"/></svg></button><button aria-label="最大化"><svg><use href="#w-max"/></svg></button><button aria-label="关闭"><svg><use href="#w-close"/></svg></button></div>
      </header>
      <div class="toolbar">
        <div class="row">
          <button class="settings"><svg class="icon"><use href="#i-chevron"/></svg>设置</button><i class="sep"></i>
          <button class="tool" aria-label="刷新"><svg class="icon"><use href="#i-refresh"/></svg></button><button class="tool" aria-label="复制"><svg class="icon"><use href="#i-copy"/></svg></button><button class="tool" aria-label="保存"><svg class="icon"><use href="#i-save"/></svg></button><button class="tool" aria-label="打印"><svg class="icon"><use href="#i-print"/></svg></button><i class="sep"></i>
          <button class="tool" aria-label="铅笔"><svg class="icon"><use href="#i-pencil"/></svg></button><button class="tool" aria-label="矩形"><svg class="icon"><use href="#i-rect"/></svg></button><button class="tool" aria-label="箭头"><svg class="icon"><use href="#i-arrow"/></svg></button><button class="tool" aria-label="直线"><svg class="icon"><use href="#i-line"/></svg></button><button class="tool" aria-label="文字"><svg class="icon"><use href="#i-a"/></svg></button><i class="sep"></i>
          <button class="tool" aria-label="锁定"><svg class="icon"><use href="#i-lock"/></svg></button><i class="sep"></i>
          <button class="tool on" aria-label="适应窗口"><svg class="icon"><use href="#i-frame"/></svg></button><button class="tool wide" aria-label="克隆窗口"><svg class="icon"><use href="#i-windows"/></svg></button><button class="tool wide" aria-label="图层"><svg class="icon"><use href="#i-layers"/></svg></button><button class="drop">3 x 4<svg class="caret"><use href="#i-down"/></svg></button><button class="tool" aria-label="重置"><svg class="icon"><use href="#i-target"/></svg></button><i class="sep"></i>
          <button class="drop">标准<svg class="caret"><use href="#i-down"/></svg></button>
        </div>
        <div class="row">
          <button class="drop">自动<svg class="caret"><use href="#i-down"/></svg></button><i class="sep"></i><button class="drop">当前的<svg class="caret"><use href="#i-down"/></svg></button><button class="tool" aria-label="帮助"><svg class="icon"><use href="#i-help"/></svg></button>
        </div>
      </div>
      <div class="canvas">
        <svg class="plot" viewBox="869 739 769 381" preserveAspectRatio="xMinYMin meet">
          <g fill="none">
            <path stroke="#e6e6e6" d="M1043.500 774V1024M1098.500 774V1024M1153.500 774V1024M1209.500 774V1024M1264.500 774V1024M1319.500 774V1024M1374.500 774V1024M1429.500 774V1024M1485.500 774V1024M1540.500 774V1024M988 774.500H1540M988 799.500H1540M988 824.500H1540M988 849.500H1540M988 874.500H1540M988 899.500H1540M988 924.500H1540M988 949.500H1540M988 974.500H1540M988 999.500H1540"/>
            <path stroke="#333" stroke-width="2" d="M988 774V1025H1541"/>
            <path stroke="#222" d="M988 774.500L1264 824 1540 874"/>
            <path stroke="#0f0" d="M988 774.500C1172 823 1356 892 1540 929"/>
            <path stroke="red" d="M988 774.500C1172 820 1356 884 1540 918"/>
            <path stroke="red" stroke-dasharray="2 2" d="M988 774.500C1172 818 1356 880 1540 914"/>
            <path stroke="#c8b400" d="M988 774.500C1172 817 1356 878 1540 911"/>
            <path stroke="#00f" d="M988 774.500C1172 815 1356 875 1540 907"/>
            <path stroke="#f0f" d="M988 774.500C1172 816 1356 876 1540 909"/>
          </g>
          <g class="t14 end"><text x="982" y="779">1.0</text><text x="982" y="904">0.5</text><text x="982" y="1029">0</text></g>
          <g class="t14"><text x="988" y="1043">0</text><text x="1043" y="1043">3.0</text><text x="1098" y="1043">6.0</text><text x="1153" y="1043">9.0</text><text x="1209" y="1043">12.0</text><text x="1264" y="1043">15.0</text><text x="1319" y="1043">18.0</text><text x="1374" y="1043">21.0</text><text x="1429" y="1043">24.0</text><text x="1485" y="1043">27.0</text><text x="1540" y="1043">30.0</text></g>
          <g class="t16"><text x="1264" y="1069">空间频率:周期/mm</text><text transform="translate(929 899) rotate(-90)">OTF模值</text></g>
        </svg>
        <div class="legend legend-mtf">
          <label><input type="checkbox" checked><i class="black"></i>衍射极限-子午</label><label><input type="checkbox" checked><i class="black dot"></i>衍射极限-弧矢</label><label><input type="checkbox" checked><i class="blue"></i>0.0000 (度)-子午</label><label><input type="checkbox" checked><i class="blue dot"></i>0.0000 (度)-弧矢</label><label><input type="checkbox" checked><i class="green"></i>6.0000 (度)-子午</label><label><input type="checkbox" checked><i class="green dot"></i>6.0000 (度)-弧矢</label>
          <label><input type="checkbox" checked><i class="red"></i>4.0000 (度)-子午</label><label><input type="checkbox" checked><i class="red dot"></i>4.0000 (度)-弧矢</label><label><input type="checkbox" checked><i class="gold"></i>2.0000 (度)-子午</label><label><input type="checkbox" checked><i class="gold dot"></i>2.0000 (度)-弧矢</label><label><input type="checkbox" checked><i class="pink"></i>1.5000 (度)-子午</label><label><input type="checkbox" checked><i class="pink dot"></i>1.5000 (度)-弧矢</label>
        </div>
        <p class="mtf-name">复色光衍射MTF</p>
      </div>
    </section>
  </main>
  <footer class="status"><span>EFFL: 50</span><span>WFNO: 1.08496</span></footer>
  <div class="watermark">CSDN @光算行者</div>
</div>
</body>
</html>
```
FILE: styles.css
```css
* { box-sizing: border-box; }

body {
  margin: 0;
  font: 18px/24px "Open Sans", "Noto Sans CJK SC", sans-serif;
  color: #111;
}

p, h2 { margin: 0; }

button {
  margin: 0;
  padding: 0;
  border: 0;
  background: none;
  font: inherit;
  color: inherit;
}

.sprite { position: absolute; width: 0; height: 0; }

.app {
  position: relative;
  display: flex;
  flex-direction: column;
  height: 100vh;
  overflow: hidden;
  background: linear-gradient(#fbfbfc, #e8eaed 55%, #d9dce1);
}

.desktop { flex: 1; }

.editor {
  position: absolute;
  top: 7px;
  left: 1px;
  right: -10px;
  height: 495px;
  border: 2px solid #7593b0;
  border-radius: 14px;
  background: repeating-linear-gradient(#d9dde3 0 34px, #a9afb7 34px 36px);
}

/* Windows */
.window {
  position: absolute;
  display: flex;
  flex-direction: column;
  border: 2px solid #9b9fa5;
  background: linear-gradient(#fdfdfd, #f4f5f6 20%, #dcdfe4);
}
.w-layout { top: 7px; left: 12px; width: calc(50% + 7px); border-radius: 0 0 3px 3px; padding-bottom: 6px; }
.w-spot { top: 7px; left: calc(50% + 19px); right: 3px; }
.w-field { top: 479px; left: 21px; width: calc(50% - 40px); border-radius: 2px; }
.w-mtf { top: 626px; left: calc(50% - 3px); width: calc(50% - 82px); bottom: 0; border-bottom: 0; border-radius: 3px 3px 0 0; z-index: 2; }

.titlebar {
  display: flex;
  align-items: center;
  gap: 7px;
  height: 33px;
  padding: 0 7px 2px 6px;
  border-bottom: 2px solid #b3b6ba;
  background: #fff;
}
.titlebar h2 { flex: 1; font-size: 18px; font-weight: 400; }
.icon { flex: none; width: 24px; height: 24px; }
.winbtns { display: flex; }
.winbtns button { display: flex; align-items: center; justify-content: center; width: 30px; height: 28px; }
.winbtns svg { width: 14px; height: 14px; }

.toolbar {
  display: flex;
  flex-direction: column;
  gap: 2px;
  padding: 4px 0 4px 6px;
  background: linear-gradient(#fff, #f8f9f9);
}
.toolbar.tight { padding-bottom: 1px; }
.row { display: flex; align-items: center; height: 34px; }
.settings { display: flex; align-items: center; gap: 6px; flex: none; width: 71px; padding: 0 2px; }
.sep { flex: none; width: 1px; height: 34px; margin: 0 4px 0 3px; background: #b4c8de; }
.tool { display: flex; flex: none; align-items: center; justify-content: center; width: 35px; height: 34px; }
.tool.on { border: 2px solid #c29b2b; border-radius: 4px; background: linear-gradient(#f6cf95, #fbd98a 60%, #fdf0b4); }
.tool.wide { margin-left: 3px; }
.tool.view { width: 51px; gap: 4px; }
.drop { display: flex; flex: none; align-items: center; gap: 6px; height: 34px; padding: 0 9px; }
.row + .row .drop { padding: 0 8px; }
.caret { width: 8px; height: 8px; }

.canvas {
  position: relative;
  display: flex;
  flex-direction: column;
  margin: 0 5px;
  background: #fff;
  font: 11px/13px "DejaVu Sans Mono", "Noto Sans CJK SC", monospace;
}
.canvas.boxed { border: 2px solid #000; }
.plot { display: block; width: 100%; height: auto; }
.plot text { fill: #111; text-anchor: middle; }
.plot .end text { text-anchor: end; }
.plot .t10 { font-size: 10px; }
.plot .t12 { font-size: 12px; }
.plot .t14 { font-size: 14px; }
.plot .t16 { font-size: 16px; }
.plot .axis-y, .plot .axis-z { font: 20px "Open Sans", sans-serif; text-anchor: start; font-weight: 300; }
.plot .axis-y { fill: #0d0; }
.plot .axis-z { fill: #22f; font-size: 18px; }

/* Legends */
input[type="checkbox"] {
  appearance: none;
  flex: none;
  width: 8px;
  height: 8px;
  margin: 0;
  border: 1px solid #000;
  background: #eef8ee;
}
input[type="checkbox"]:checked::before {
  content: "";
  display: block;
  width: 3px;
  height: 5px;
  margin-left: 2px;
  border: solid #0a8a0a;
  border-width: 0 2px 2px 0;
  transform: rotate(40deg);
}
.legend { display: grid; font-size: 10px; line-height: 12px; border-right: 1px solid #555; }
.legend label { display: flex; align-items: center; white-space: pre; }
.legend i { flex: none; width: 7px; margin: 0 1px; border-top: 2px solid; }
.legend i.dot { border-top: 1px dotted; }
.blue { color: #00f; }
.green { color: #0d0; }
.red { color: red; }
.gold { color: #b8a400; }
.pink { color: #f0f; }
.black { color: #333; }

.wave-legend {
  position: absolute;
  top: 4px;
  left: 617px;
  padding: 1px 2px 2px 0;
  border-left: 1px solid #000;
  font-size: 14px;
  line-height: 17px;
}
.wave-legend label { display: flex; align-items: center; }
.pt { width: 9px; font-size: 8px; font-weight: 400; text-align: center; }
.plus { color: #44f; }
.square { color: #0e0; }
.tri { font-size: 6px; color: red; }

/* Spot diagram footer */
.surface { padding-left: 2px; font-size: 15px; line-height: 22px; }
.plot-name { width: 660px; line-height: 14px; text-align: center; }
.spot-footer { display: grid; grid-template-columns: 437px 219px; width: 656px; height: 83px; border-top: 1px solid #999; }
.spot-data { padding: 1px 0 0 10px; }
.spot-data p, .spot-data th, .spot-data td { white-space: pre; }
.spot-data table { border-collapse: collapse; table-layout: fixed; width: 357px; }
.spot-data th, .spot-data td { padding: 0 13px 0 0; font-weight: 400; line-height: 13px; text-align: right; }
.spot-data th { width: 54px; padding: 0; text-align: left; }
.spot-data th + td { width: 71px; }
.spot-data .head td { padding: 0; }
.spot-data .ref { padding-left: 18px; text-align: left; }
.spot-id { display: grid; grid-template-rows: 49px 1fr; border-left: 1px solid #555; text-align: center; }
.spot-id p { padding: 1px 10px 0 0; }
.spot-id p + p { border-top: 1px solid #555; }

/* Field curvature footer */
.field-legends { display: flex; align-items: flex-end; gap: 92px; padding-left: 20px; }
.legend-curv { grid-template-columns: 98px 98px 98px; width: 297px; height: 27px; padding-top: 2px; border-left: 1px solid #bbb; }
.legend-dist { grid-template-columns: 61px 61px 61px; width: 189px; height: 16px; padding: 2px 0 0 2px; border-top: 1px solid #888; }
.field-footer { display: grid; grid-template-columns: 336px 335px; width: 671px; height: 101px; margin-top: 11px; border-top: 1px solid #888; }
.field-footer > div { border-right: 1px solid #777; }
.center { padding: 2px 0 0 4px; text-align: center; }
.notes { padding: 15px 0 0 10px; white-space: pre; }
.cols { display: flex; justify-content: space-between; }
.ids { display: grid; grid-template-rows: 46px 1fr; padding: 3px 12px 0 0; text-align: center; }
.tiny { font-size: 7px; line-height: 9px; }
.small { font-size: 9px; line-height: 11px; padding-top: 4px; }

/* MTF footer */
.legend-mtf { grid-template-columns: repeat(6, 107px); width: 646px; height: 27px; margin-left: 25px; padding: 2px 0 0 1px; border-top: 1px solid #999; }
.legend-mtf i { margin: 0; }
.mtf-name { width: 695px; height: 16px; margin-top: 12px; border-right: 1px solid #555; text-align: center; line-height: 16px; }

/* Tabs */
.tabs {
  display: flex;
  height: 33px;
  margin-top: 6px;
  border-top: 2px solid #5f6b82;
  background: #c9ccd1;
}
.tab { display: grid; width: 94px; height: 30px; }
.tab svg, .tab span { grid-area: 1 / 1; }
.tab svg { width: 100%; height: 30px; fill: #b3b9c3; stroke: #66718a; stroke-width: 2px; }
.tab span { z-index: 1; line-height: 22px; }
.tab.active { width: 118px; }
.tab.active svg { fill: #dfe1e5; }
.tab.active span { padding-left: 22px; }

.status {
  display: flex;
  height: 15px;
  padding-left: 5px;
  overflow: hidden;
  background: linear-gradient(#27499f, #1a3580);
  color: #fff;
}
.status span { width: 505px; }
.status span + span { padding-left: 9px; border-left: 1px solid #5a78c0; }

.watermark {
  position: absolute;
  right: 6px;
  bottom: 10px;
  z-index: 3;
  font-size: 33px;
  line-height: 40px;
  color: rgba(235, 235, 238, .75);
  text-shadow: 1px 1px 2px rgba(60, 60, 70, .7);
}
```
